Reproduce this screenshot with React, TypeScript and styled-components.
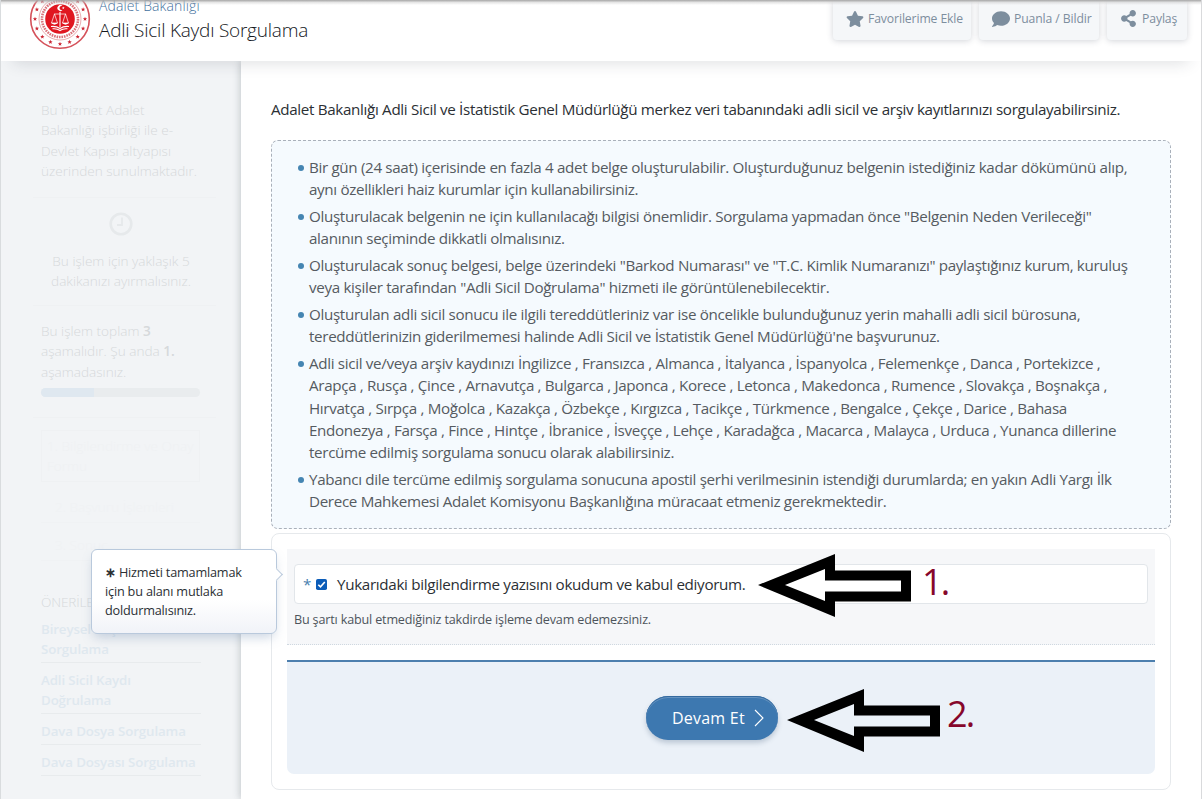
import React from "react";
import styled, { createGlobalStyle } from "styled-components";
import { FaComment, FaShareAlt, FaStar } from "react-icons/fa";

const Global = createGlobalStyle`
  * { box-sizing: border-box; }
  html, body { margin: 0; padding: 0; }
  body { background: #fff; overflow: hidden; font-family: "Open Sans", "Noto Sans", sans-serif; color: #2b2f34; }
  p, ul, h1, h2 { margin: 0; padding: 0; font-weight: 400; }
`;

const Page = styled.div`
  position: relative;
  width: 1202px;
  height: 799px;
  overflow: hidden;
  display: flex;
  flex-direction: column;
  border-left: 1px solid #d9dcde;
  border-right: 1px solid #d9dadc;
`;

const TopShade = styled.div`
  position: absolute;
  z-index: 5;
  top: 0;
  left: -1px;
  width: 1202px;
  height: 5px;
  background: linear-gradient(#a6a6a6, rgba(200, 200, 200, 0.45) 50%, rgba(255, 255, 255, 0));
`;

const Header = styled.header`
  position: relative;
  z-index: 2;
  flex: none;
  height: 61px;
  display: flex;
  background: #fff;
  padding: 0 14px 0 28px;
  box-shadow: 0 14px 16px -12px rgba(40, 50, 60, 0.15);
`;

const Emblem = styled.svg`
  flex: none;
  width: 62px;
  height: 62px;
  margin-top: -12px;
`;

const Titles = styled.div`
  margin: -5px 0 0 8px;
  flex: 1;
`;

const Ministry = styled.p`
  font-size: 14px;
  line-height: 22px;
  font-weight: 300;
  letter-spacing: 0.12px;
  color: #3f6f9d;
`;

const Title = styled.h1`
  font-size: 19px;
  line-height: 26px;
  font-weight: 300;
  letter-spacing: -0.23px;
  color: #14181c;
`;

const Actions = styled.div`
  display: flex;
  gap: 8px;
`;

const Action = styled.div<{ $w: number; $gap: number }>`
  width: ${(p) => p.$w}px;
  height: 40px;
  padding: 0 0 3px 13px;
  display: flex;
  align-items: center;
  gap: ${(p) => p.$gap}px;
  border-radius: 0 0 4px 4px;
  background: #f5f7f9;
  box-shadow: 0 1px 6px rgba(50, 60, 80, 0.22);
  color: #7d8e9e;
  font-size: 12.2px;
  letter-spacing: -0.11px;
  white-space: nowrap;
`;

const Body = styled.div`
  flex: 1;
  display: flex;
  min-height: 0;
`;

const Sidebar = styled.aside`
  width: 240px;
  flex: none;
  padding: 39px 25px 0 40px;
  background: #f2f4f6;
  color: #d6d9db;
  font-size: 13.6px;
  font-weight: 300;
  line-height: 20.4px;
`;

const SideText = styled.p<{ $center?: boolean; $h: number }>`
  height: ${(p) => p.$h}px;
  width: 160px;
  white-space: nowrap;
  text-align: ${(p) => (p.$center ? "center" : "left")};
  font-weight: 300;
  b { font-weight: 600; }
`;

const SideRule = styled.div<{ $after: number }>`
  height: 1px;
  margin: 0 0 ${(p) => p.$after}px -8px;
  background: #eff1f3;
`;

const Clock = styled.svg`
  display: block;
  width: 24px;
  height: 24px;
  margin: 0 0 15px 68px;
`;

const Progress = styled.div`
  width: 159px;
  height: 9px;
  border-radius: 5px;
  overflow: hidden;
  background: #e9ecee;
  margin-bottom: 20px;
`;

const ProgressFill = styled.div`
  width: 53px;
  height: 9px;
  background: #dfe8f0;
`;

const StepBox = styled.div`
  width: 159px;
  height: 52px;
  padding: 5px;
  margin-bottom: 15px;
  border: 1px solid #eff1f3;
  color: #eff1f3;
  white-space: nowrap;
`;

const StepNext = styled.p<{ $after: number }>`
  width: 159px;
  height: 26px;
  padding-left: 14px;
  margin-bottom: ${(p) => p.$after}px;
  border-bottom: 1px solid #f0f2f4;
  color: #f0f2f4;
  font-weight: 300;
`;

const SideHeading = styled.h2`
  font-size: 13.6px;
  font-weight: 300;
  line-height: 20px;
  letter-spacing: -0.15px;
  margin-bottom: 7px;
  white-space: nowrap;
  color: #d6d9db;
`;

const SideLink = styled.p`
  width: 160px;
  font-weight: 600;
  font-size: 13.3px;
  line-height: 20px;
  letter-spacing: -0.12px;
  padding-bottom: 3px;
  margin-bottom: 7px;
  border-bottom: 1px solid #e8ebed;
  color: #dfe8ef;
  white-space: nowrap;
`;

const Main = styled.main`
  flex: 1;
  padding: 36px 30px 0;
  background: #fff;
  box-shadow: -1px 0 7px rgba(60, 70, 80, 0.25);
`;

const Intro = styled.p`
  font-size: 15.2px;
  line-height: 24px;
  letter-spacing: -0.33px;
  margin-bottom: 19px;
  white-space: nowrap;
`;

const Notice = styled.ul`
  height: 389px;
  width: 900px;
  padding: 15px 0 0 37px;
  list-style: none;
  border: 1px dashed #a9b0ba;
  border-radius: 7px;
  background: #f5fafe;
  color: #555b61;
`;

const NoticeItem = styled.li`
  position: relative;
  margin-bottom: 4.3px;
  font-size: 15.2px;
  line-height: 22.34px;
  letter-spacing: -0.337px;
  white-space: nowrap;
  &::before {
    content: "";
    position: absolute;
    left: -11px;
    top: 9px;
    width: 6px;
    height: 6px;
    border-radius: 50%;
    background: #4585b2;
  }
`;

const Line = styled.span`
  display: block;
`;

const FormCard = styled.section`
  width: 900px;
  height: 257px;
  margin-top: 4px;
  padding: 15px;
  border: 1px solid #e6e9ec;
  border-radius: 8px;
`;

const Field = styled.div`
  height: 96px;
  padding: 15px 7px 0;
  background: #f6f7f9;
  border-bottom: 1px dotted #cfd8e0;
`;

const CheckRow = styled.label`
  height: 40px;
  display: flex;
  align-items: center;
  padding: 0 0 0 8px;
  border: 1px solid #e2e6ea;
  border-radius: 4px;
  background: #fff;
  font-size: 15.2px;
  letter-spacing: -0.32px;
  white-space: nowrap;
`;

const Asterisk = styled.span`
  width: 13px;
  color: #4880ae;
`;

const Check = styled.svg`
  width: 11px;
  height: 11px;
  margin-right: 10px;
`;

const Hint = styled.p`
  margin-top: 6px;
  font-size: 12.6px;
  line-height: 20px;
  letter-spacing: -0.17px;
  color: #4d545b;
  white-space: nowrap;
`;

const Submit = styled.div`
  height: 114px;
  margin-top: 15px;
  display: flex;
  justify-content: center;
  align-items: center;
  padding-right: 18px;
  border-top: 2px solid #4d7fae;
  border-radius: 0 0 7px 7px;
  background: #ebf1f8;
`;

const Button = styled.button`
  width: 132px;
  height: 44px;
  display: flex;
  align-items: center;
  gap: 9px;
  padding: 0 0 0 26px;
  border: 0;
  border-radius: 22px;
  background: #3d78b0;
  box-shadow: inset 0 1px 0 #346a9f, inset 0 2px 0 #6492bf, 0 3px 5px rgba(50, 80, 110, 0.25);
  color: #fff;
  font: 500 16px "Open Sans", sans-serif;
  letter-spacing: 0.22px;
  white-space: nowrap;
`;

const Tooltip = styled.div`
  position: absolute;
  z-index: 4;
  left: 90px;
  top: 549px;
  width: 186px;
  height: 85px;
  padding: 13px;
  border: 1px solid #b9c9dc;
  border-radius: 6px;
  background: linear-gradient(#fff 60%, #f1f3f8);
  box-shadow: 0 6px 12px -3px rgba(100, 130, 170, 0.35);
  font-size: 12.7px;
  line-height: 19px;
  letter-spacing: -0.19px;
  white-space: nowrap;
  &::after {
    content: "";
    position: absolute;
    right: -5px;
    top: 20px;
    width: 8px;
    height: 8px;
    transform: rotate(45deg);
    border-top: 1px solid #b9c9dc;
    border-right: 1px solid #b9c9dc;
    background: #fff;
  }
`;

const Pointer = styled.svg<{ $x: number; $y: number }>`
  position: absolute;
  z-index: 6;
  left: ${(p) => p.$x}px;
  top: ${(p) => p.$y}px;
  width: 155px;
  height: 64px;
`;

const PointerLabel = styled.span<{ $x: number; $y: number }>`
  position: absolute;
  z-index: 6;
  left: ${(p) => p.$x}px;
  top: ${(p) => p.$y}px;
  font-size: 36px;
  line-height: 48px;
  letter-spacing: -1.8px;
  color: #86072b;
`;

const NOTICE: string[][] = [
  [
    "Bir gün (24 saat) içerisinde en fazla 4 adet belge oluşturulabilir. Oluşturduğunuz belgenin istediğiniz kadar dökümünü alıp,",
    "aynı özellikleri haiz kurumlar için kullanabilirsiniz.",
  ],
  [
    'Oluşturulacak belgenin ne için kullanılacağı bilgisi önemlidir. Sorgulama yapmadan önce "Belgenin Neden Verileceği"',
    "alanının seçiminde dikkatli olmalısınız.",
  ],
  [
    'Oluşturulacak sonuç belgesi, belge üzerindeki "Barkod Numarası" ve "T.C. Kimlik Numaranızı" paylaştığınız kurum, kuruluş',
    'veya kişiler tarafından "Adli Sicil Doğrulama" hizmeti ile görüntülenebilecektir.',
  ],
  [
    "Oluşturulan adli sicil sonucu ile ilgili tereddütleriniz var ise öncelikle bulunduğunuz yerin mahalli adli sicil bürosuna,",
    "tereddütlerinizin giderilmemesi halinde Adli Sicil ve İstatistik Genel Müdürlüğü'ne başvurunuz.",
  ],
  [
    "Adli sicil ve/veya arşiv kaydınızı İngilizce , Fransızca , Almanca , İtalyanca , İspanyolca , Felemenkçe , Danca , Portekizce ,",
    "Arapça , Rusça , Çince , Arnavutça , Bulgarca , Japonca , Korece , Letonca , Makedonca , Rumence , Slovakça , Boşnakça ,",
    "Hırvatça , Sırpça , Moğolca , Kazakça , Özbekçe , Kırgızca , Tacikçe , Türkmence , Bengalce , Çekçe , Darice , Bahasa",
    "Endonezya , Farsça , Fince , Hintçe , İbranice , İsveççe , Lehçe , Karadağca , Macarca , Malayca , Urduca , Yunanca dillerine",
    "tercüme edilmiş sorgulama sonucu olarak alabilirsiniz.",
  ],
  [
    "Yabancı dile tercüme edilmiş sorgulama sonucuna apostil şerhi verilmesinin istendiği durumlarda; en yakın Adli Yargı İlk",
    "Derece Mahkemesi Adalet Komisyonu Başkanlığına müracaat etmeniz gerekmektedir.",
  ],
];

const starPoints = (cx: number, cy: number, r: number) =>
  Array.from({ length: 10 }, (_, i) => {
    const a = (Math.PI / 5) * i - Math.PI / 2;
    const d = i % 2 ? r * 0.42 : r;
    return `${cx + d * Math.cos(a)},${cy + d * Math.sin(a)}`;
  }).join(" ");

function MinistryEmblem() {
  return (
    <Emblem viewBox="0 0 62 62">
      <circle cx="31" cy="31" r="29.3" fill="#fff" stroke="#d5515a" strokeWidth="1.6" />
      {Array.from({ length: 16 }, (_, i) => {
        const a = (Math.PI / 8) * i;
        return <polygon key={i} points={starPoints(31 + 25 * Math.sin(a), 31 - 25 * Math.cos(a), 2.3)} fill="#cb2634" />;
      })}
      <circle cx="31" cy="31" r="21" fill="none" stroke="#e0868c" strokeWidth="0.7" />
      <circle cx="31" cy="31" r="18" fill="none" stroke="#d9737b" strokeWidth="2.6" strokeDasharray="1.6 0.9" />
      <circle cx="31" cy="31" r="14.8" fill="#e01620" />
      <path d="M33.5 17.800a3 3 0 1 0 0 4.400a2.300 2.300 0 1 1 0-4.400z" fill="#fff" />
      <polygon points={starPoints(34.3, 20, 1.4)} fill="#fff" />
      <g stroke="#fff" fill="none" strokeWidth="0.7">
        <path d="M31 24v15" strokeWidth="1.100" />
        <path d="M25 26h12M25.500 26l-3 9M25.500 26l3 9M36.500 26l-3 9M36.500 26l3 9" />
        <path d="M22.500 35q3 2.600 6 0zM33.500 35q3 2.600 6 0z" fill="#fff" />
        <path d="M22 38.500q5.500-.5 9 2q3.500-2.500 9-2M23.500 40.800q4.500-.5 7.500 1.700q3-2.200 7.500-1.700" strokeWidth="1.100" />
      </g>
    </Emblem>
  );
}

function Arrow({ x, y }: { x: number; y: number }) {
  return (
    <Pointer $x={x} $y={y} viewBox="0 0 155 64">
      <path
        fillRule="evenodd"
        d="M0 31L77 0V16.500H153V47.500H77V63ZM27 31L67 47V37.500H143V26.500H67V15Z"
      />
    </Pointer>
  );
}

export default function App() {
  return (
    <Page>
      <Global />
      <TopShade />
      <Header>
        <MinistryEmblem />
        <Titles>
          <Ministry>Adalet Bakanlığı</Ministry>
          <Title>Adli Sicil Kaydı Sorgulama</Title>
        </Titles>
        <Actions>
          <Action $w={138} $gap={4}><FaStar size={18} />Favorilerime Ekle</Action>
          <Action $w={120} $gap={4}><FaComment size={18} />Puanla / Bildir</Action>
          <Action $w={80} $gap={5}><FaShareAlt size={17} />Paylaş</Action>
        </Actions>
      </Header>
      <Body>
        <Sidebar>
          <SideText $h={97}>
            Bu hizmet Adalet<br />Bakanlığı işbirliği ile e-<br />Devlet Kapısı altyapısı<br />üzerinden sunulmaktadır.
          </SideText>
          <SideRule $after={14} />
          <Clock viewBox="0 0 24 24" fill="none" stroke="#e6e9eb">
            <circle cx="12" cy="12" r="10.300" strokeWidth="2.600" />
            <path d="M13 5.500V13H8" strokeWidth="1.800" />
          </Clock>
          <SideText $center $h={54}>Bu işlem için yaklaşık 5<br />dakikanızı ayırmalısınız.</SideText>
          <SideRule $after={15} />
          <SideText $h={67}>
            Bu işlem toplam <b>3</b><br />aşamalıdır. Şu anda <b>1.</b><br />aşamadasınız.
          </SideText>
          <Progress><ProgressFill /></Progress>
          <SideRule $after={12} />
          <StepBox>1. Bilgilendirme ve Onay<br />Formu</StepBox>
          <StepNext $after={12}>2. Başvuru İşlemleri</StepNext>
          <StepNext $after={31}>3. Sonuç</StepNext>
          <SideHeading>ÖNERİLEN HİZMETLER</SideHeading>
          <SideLink>Bireysel Başvuru<br />Sorgulama</SideLink>
          <SideLink>Adli Sicil Kaydı<br />Doğrulama</SideLink>
          <SideLink>Dava Dosya Sorgulama</SideLink>
          <SideLink>Dava Dosyası Sorgulama</SideLink>
        </Sidebar>
        <Main>
          <Intro>
            Adalet Bakanlığı Adli Sicil ve İstatistik Genel Müdürlüğü merkez veri tabanındaki adli sicil ve arşiv kayıtlarınızı sorgulayabilirsiniz.
          </Intro>
          <Notice>
            {NOTICE.map((lines, i) => (
              <NoticeItem key={i}>
                {lines.map((text) => <Line key={text}>{text}</Line>)}
              </NoticeItem>
            ))}
          </Notice>
          <FormCard>
            <Field>
              <CheckRow>
                <Asterisk>*</Asterisk>
                <Check viewBox="0 0 11 11">
                  <rect width="11" height="11" rx="1.800" fill="#0b5cb8" />
                  <path d="M2.300 5.700L4.500 7.900L8.800 3" fill="none" stroke="#fff" strokeWidth="1.600" />
                </Check>
                Yukarıdaki bilgilendirme yazısını okudum ve kabul ediyorum.
              </CheckRow>
              <Hint>Bu şartı kabul etmediğiniz takdirde işleme devam edemezsiniz.</Hint>
            </Field>
            <Submit>
              <Button type="button">
                Devam Et
                <svg width="10" height="18" viewBox="0 0 10 18" fill="none" stroke="#fff" strokeWidth="1.100">
                  <path d="M1 1L9 9L1 17" />
                </svg>
              </Button>
            </Submit>
          </FormCard>
        </Main>
      </Body>
      <Tooltip><b>∗</b> Hizmeti tamamlamak<br />için bu alanı mutlaka<br />doldurmalısınız.</Tooltip>
      <Arrow x={757} y={554} />
      <PointerLabel $x={921} $y={558}>1.</PointerLabel>
      <Arrow x={786} y={689} />
      <PointerLabel $x={946} $y={690}>2.</PointerLabel>
    </Page>
  );
}
